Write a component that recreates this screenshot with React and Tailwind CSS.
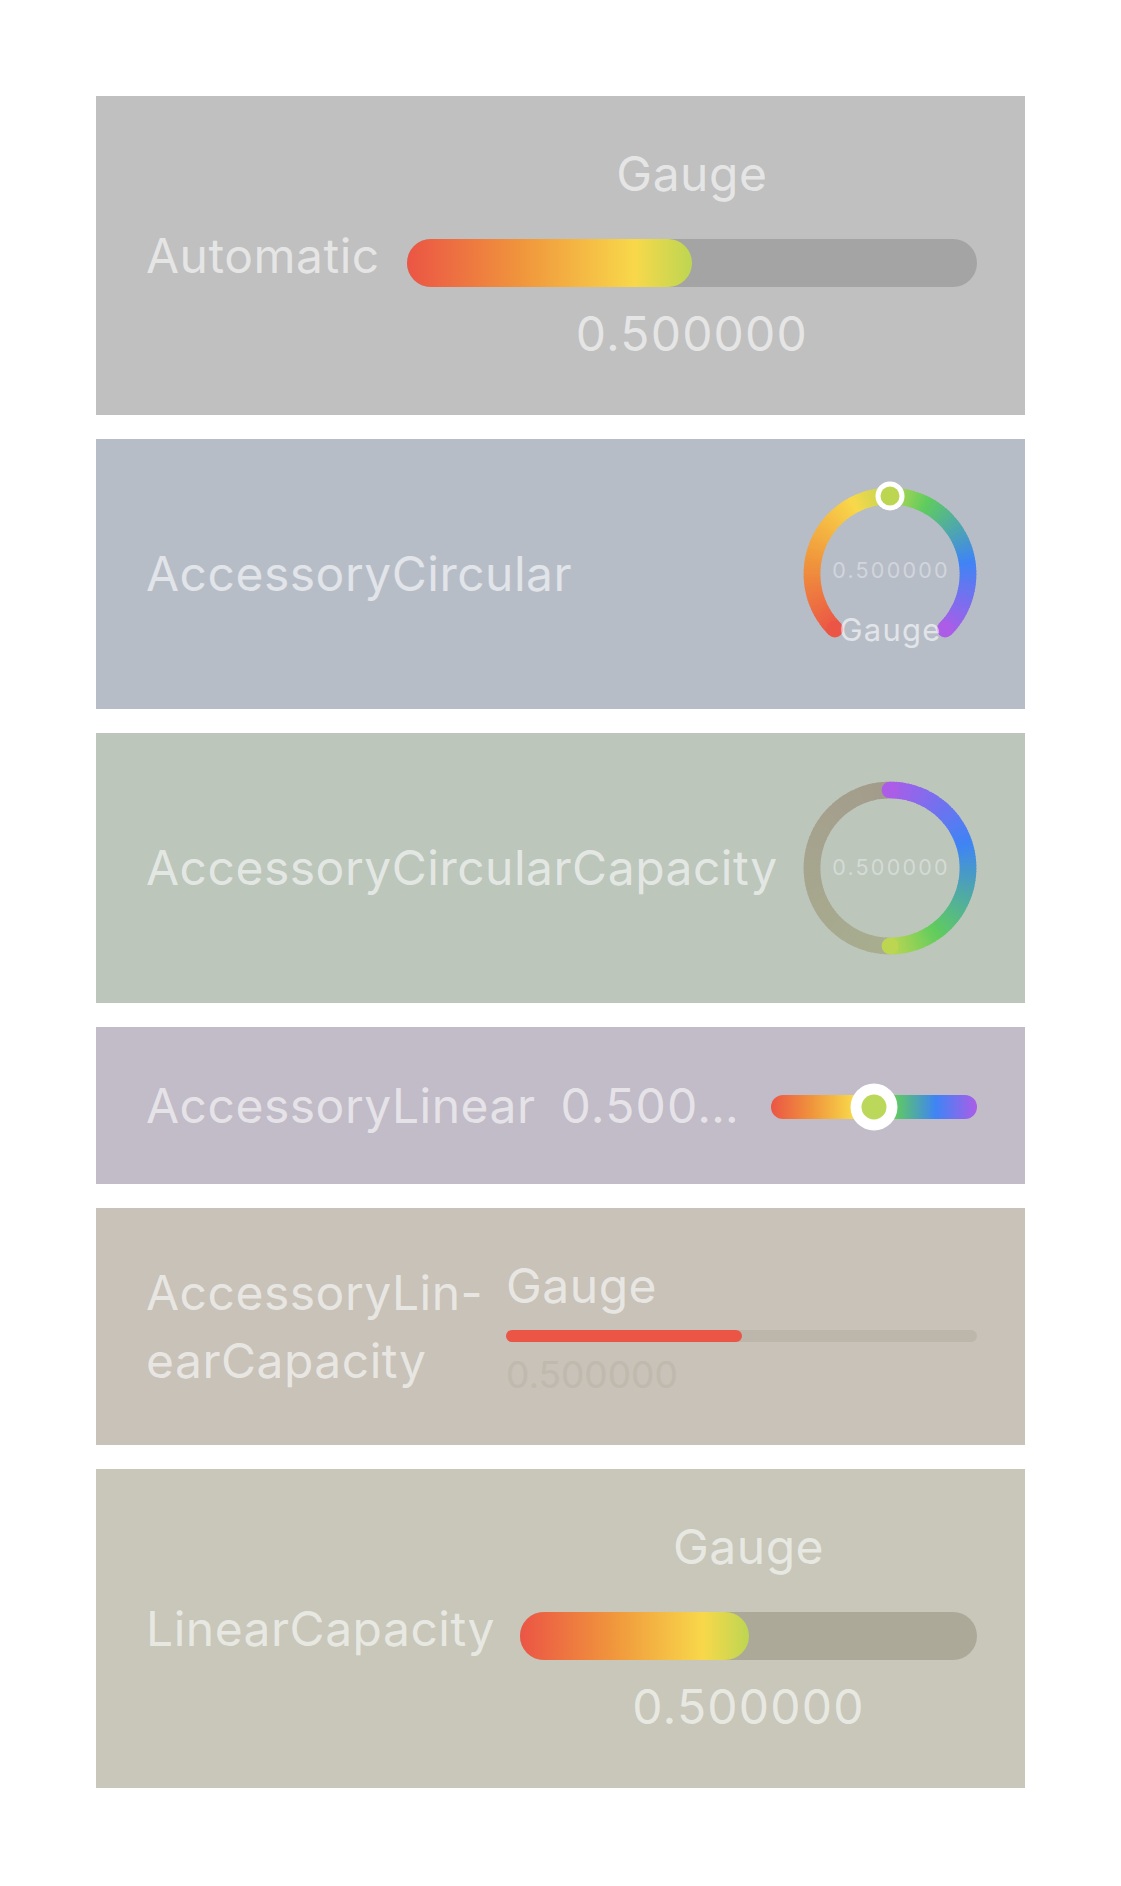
import React from "react";

const STOPS = [
  [0, [235, 85, 69]],
  [0.2, [240, 149, 60]],
  [0.4, [248, 216, 74]],
  [0.5, [189, 214, 82]],
  [0.6, [95, 204, 94]],
  [0.8, [63, 132, 245]],
  [1, [171, 93, 232]],
];

function lerpStops(stops, t) {
  t = Math.max(0, Math.min(1, t));
  for (let i = 0; i < stops.length - 1; i++) {
    const [t0, c0] = stops[i];
    const [t1, c1] = stops[i + 1];
    if (t <= t1) {
      const f = (t - t0) / (t1 - t0);
      return `rgb(${c0.map((v, k) => Math.round(v + (c1[k] - v) * f)).join(",")})`;
    }
  }
  const c = stops[stops.length - 1][1];
  return `rgb(${c.join(",")})`;
}

const spectrum = (t) => lerpStops(STOPS, t);

const TRACK = [
  [0, [168, 174, 143]],
  [0.5, [166, 165, 142]],
  [1, [163, 155, 140]],
];

function polar(cx, cy, r, deg) {
  const a = (deg * Math.PI) / 180;
  return [cx + r * Math.cos(a), cy + r * Math.sin(a)];
}

function arcPath(cx, cy, r, a0, a1) {
  const [x0, y0] = polar(cx, cy, r, a0);
  const [x1, y1] = polar(cx, cy, r, a1);
  const large = a1 - a0 > 180 ? 1 : 0;
  return `M ${x0} ${y0} A ${r} ${r} 0 ${large} 1 ${x1} ${y1}`;
}

function Segments({ cx, cy, r, w, a0, a1, n, color }) {
  const segs = [];
  for (let i = 0; i < n; i++) {
    const s = a0 + ((a1 - a0) * i) / n;
    const e = a0 + ((a1 - a0) * (i + 1)) / n + (i < n - 1 ? 0.7 : 0);
    segs.push(
      <path
        key={i}
        d={arcPath(cx, cy, r, s, e)}
        stroke={color((i + 0.5) / n)}
        strokeWidth={w}
        fill="none"
      />
    );
  }
  return <>{segs}</>;
}

const FONT = "Inter, 'Noto Sans', sans-serif";

function CircularGauge() {
  const cx = 95, cy = 95, r = 78, w = 16.7;
  const [sx, sy] = polar(cx, cy, r, 135);
  const [ex, ey] = polar(cx, cy, r, 405);
  return (
    <svg width="190" height="190" viewBox="0 0 190 190" className="shrink-0">
      <Segments cx={cx} cy={cy} r={r} w={w} a0={135} a1={405} n={120} color={spectrum} />
      <circle cx={sx} cy={sy} r={w / 2} fill={spectrum(0)} />
      <circle cx={ex} cy={ey} r={w / 2} fill={spectrum(1)} />
      <circle cx={95} cy={17} r={14.5} fill="#ffffff" />
      <circle cx={95} cy={17} r={9.5} fill={spectrum(0.5)} />
      <text x="96" y="99" textAnchor="middle" fontSize="21.5" letterSpacing="2.2" fill="#ffffff" fillOpacity="0.38" fontFamily={FONT}>
        0.500000
      </text>
      <text x="95.5" y="161.5" textAnchor="middle" fontSize="31" letterSpacing="1.2" fill="#ffffff" fillOpacity="0.6" fontFamily={FONT}>
        Gauge
      </text>
    </svg>
  );
}

function CapacityGauge() {
  const cx = 95, cy = 95, r = 78, w = 16.7;
  const [sx, sy] = polar(cx, cy, r, -90);
  const [ex, ey] = polar(cx, cy, r, 90);
  return (
    <svg width="190" height="190" viewBox="0 0 190 190" className="shrink-0">
      <Segments cx={cx} cy={cy} r={r} w={w} a0={90} a1={270} n={60} color={(t) => lerpStops(TRACK, t)} />
      <Segments cx={cx} cy={cy} r={r} w={w} a0={-90} a1={90} n={90} color={(t) => spectrum(1 - t * 0.5)} />
      <circle cx={sx} cy={sy} r={w / 2} fill={spectrum(1)} />
      <circle cx={ex} cy={ey} r={w / 2} fill={spectrum(0.5)} />
      <text x="96" y="101.5" textAnchor="middle" fontSize="21.5" letterSpacing="2.2" fill="#ffffff" fillOpacity="0.38" fontFamily={FONT}>
        0.500000
      </text>
    </svg>
  );
}

const T = "text-[48px] text-white/60 whitespace-nowrap tracking-[0.5px]";
const D = "text-[48px] text-white/60 whitespace-nowrap tracking-[1.2px]";

export default function App() {
  return (
    <div className="min-h-[1886px] w-full bg-white px-[96px] pt-[96px] pb-[98px] flex flex-col gap-6 font-['Inter','Noto_Sans',sans-serif]">
      {/* Automatic */}
      <section className="h-[319px] bg-[#c0c0c0] flex items-center pl-[50px] pr-[48px]">
        <div className={`${T} leading-[58px] shrink-0`}>Automatic</div>
        <div className="flex-1 ml-[27px] mb-[4px] flex flex-col items-center">
          <div className={`${T} leading-[58px]`}>Gauge</div>
          <div className="mt-[36px] w-full h-[48px] rounded-full bg-[#a4a4a4]">
            <div className="h-full w-1/2 rounded-full bg-[linear-gradient(90deg,#eb5545_0%,#f0953c_40%,#f8d84a_80%,#bdd652_100%)]" />
          </div>
          <div className={`${D} leading-[58px] mt-[18px]`}>0.500000</div>
        </div>
      </section>

      {/* AccessoryCircular */}
      <section className="h-[270px] bg-[#b7bdc7] flex items-center pl-[50px] pr-[40px]">
        <div className={`${T} leading-[58px]`}>AccessoryCircular</div>
        <div className="flex-1" />
        <CircularGauge />
      </section>

      {/* AccessoryCircularCapacity */}
      <section className="h-[270px] bg-[#bcc6bb] flex items-center pl-[50px] pr-[40px]">
        <div className={`${T} leading-[58px]`}>AccessoryCircularCapacity</div>
        <div className="flex-1" />
        <CapacityGauge />
      </section>

      {/* AccessoryLinear */}
      <section className="h-[157px] bg-[#c2bbc8] flex items-center pl-[50px] pr-[48px]">
        <div className={`${T} leading-[58px]`}>AccessoryLinear</div>
        <div className={`${D} leading-[58px] ml-[25px]`}>0.500…</div>
        <div className="ml-auto mt-[3px] relative w-[206px] h-[24px] rounded-full bg-[linear-gradient(90deg,#eb5545_0%,#f0953c_20%,#f8d84a_40%,#bdd652_50%,#5fcc5e_60%,#3f84f5_80%,#ab5de8_100%)]">
          <div className="absolute left-1/2 top-1/2 -translate-x-1/2 -translate-y-1/2 w-[47px] h-[47px] rounded-full bg-white flex items-center justify-center">
            <div className="w-[25px] h-[25px] rounded-full bg-[#bcd85a]" />
          </div>
        </div>
      </section>

      {/* AccessoryLinearCapacity */}
      <section className="h-[237px] bg-[#c8c2b8] flex items-center pl-[50px] pr-[48px]">
        <div className={`${T} leading-[68px] w-[334px] shrink-0`}>
          <div>AccessoryLin-</div>
          <div>earCapacity</div>
        </div>
        <div className="flex-1 ml-[26px] flex flex-col">
          <div className={`${T} leading-[58px]`}>Gauge</div>
          <div className="mt-[15px] h-[12px] rounded-full bg-[#bdb6ab]">
            <div className="h-full w-1/2 rounded-full bg-[#eb5546]" />
          </div>
          <div className="mt-[10px] text-[37px] leading-[45px] text-[#c0b9ad]">0.500000</div>
        </div>
      </section>

      {/* LinearCapacity */}
      <section className="h-[319px] bg-[#c8c7ba] flex items-center pl-[50px] pr-[48px]">
        <div className={`${T} leading-[58px] shrink-0`}>LinearCapacity</div>
        <div className="flex-1 ml-[25px] mb-[4px] flex flex-col items-center">
          <div className={`${T} leading-[58px]`}>Gauge</div>
          <div className="mt-[36px] w-full h-[48px] rounded-full bg-[#aca999]">
            <div className="h-full w-1/2 rounded-full bg-[linear-gradient(90deg,#eb5545_0%,#f0953c_40%,#f8d84a_80%,#bdd652_100%)]" />
          </div>
          <div className={`${D} leading-[58px] mt-[18px]`}>0.500000</div>
        </div>
      </section>
    </div>
  );
}
